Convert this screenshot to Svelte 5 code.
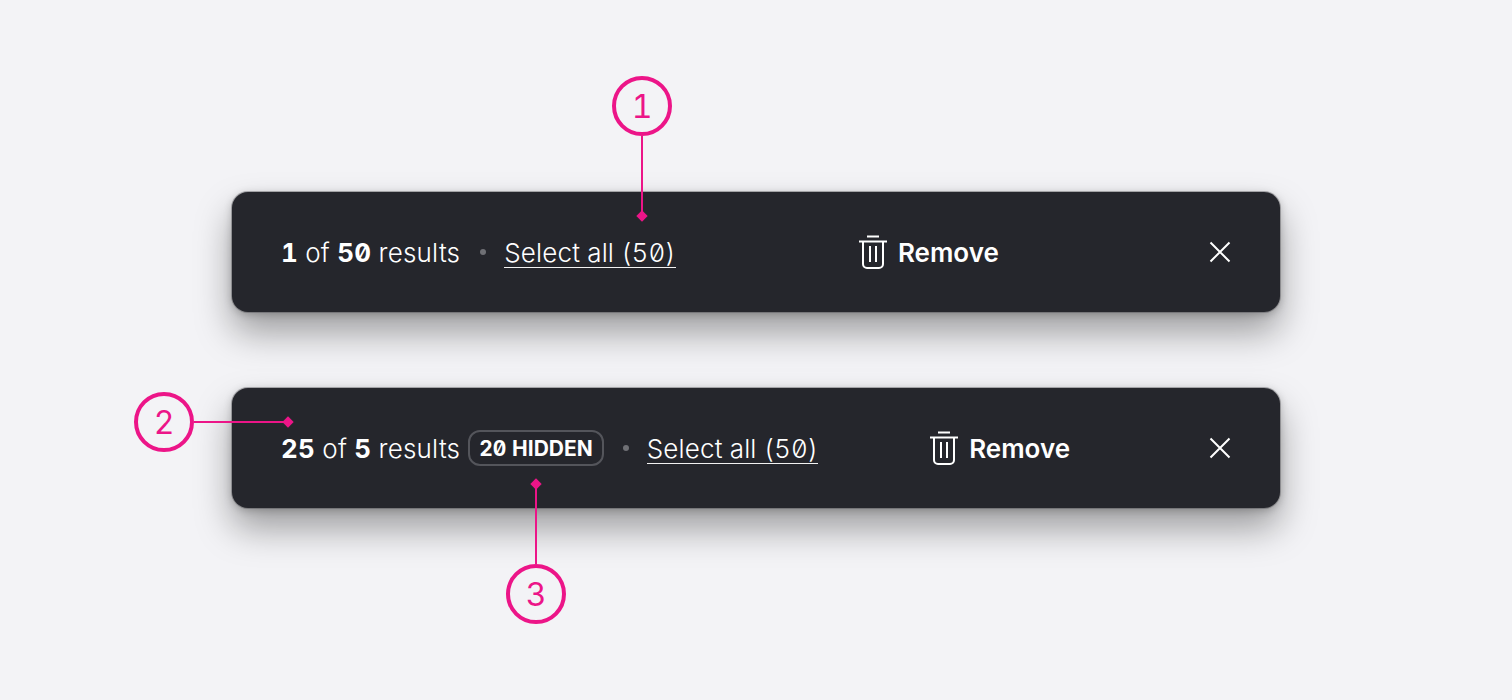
<script>
  const bars = [
    { a: '1', b: '50', hidden: null },
    { a: '25', b: '5', hidden: '20 HIDDEN' }
  ];
</script>

<main class="page">
  {#each bars as bar}
    <section class="bar">
      <div class="left">
        <span class="count"><b>{bar.a}</b> of <b>{bar.b}</b> results</span>
        {#if bar.hidden}<span class="badge">{bar.hidden}</span>{/if}
        <span class="dot"></span>
        <span class="link">Select all (50)</span>
      </div>
      <div class="remove">
        <svg width="28" height="34" viewBox="0 0 28 34" fill="none" stroke="#fff" stroke-width="2">
          <path d="M0 6.5H28M8 1.5H20M4 6.5V29a4 4 0 0 0 4 4H20a4 4 0 0 0 4-4V6.5M11 11V27M17 11V27"/>
        </svg>
        <span>Remove</span>
      </div>
      <svg class="close" width="22" height="22" viewBox="0 0 22 22" fill="none" stroke="#fff" stroke-width="2">
        <path d="M1.5 1.5L20.5 20.5M20.5 1.5L1.5 20.5"/>
      </svg>
    </section>
  {/each}

  <div class="pin one">
    <span class="circle">1</span><span class="vline"></span><span class="diamond"></span>
  </div>
  <div class="pin two">
    <span class="circle">2</span><span class="hline"></span><span class="diamond"></span>
  </div>
  <div class="pin three">
    <span class="diamond"></span><span class="vline"></span><span class="circle">3</span>
  </div>
</main>

<style>
  :global(body) {
    margin: 0;
    background: #f3f3f6;
  }
  .page {
    position: relative;
    height: 700px;
    box-sizing: border-box;
    padding-top: 192px;
    display: flex;
    flex-direction: column;
    align-items: center;
    gap: 76px;
    overflow: hidden;
    font-family: Inter, "Noto Sans", sans-serif;
    font-feature-settings: "zero", "tnum";
  }
  .bar {
    width: 1048px;
    height: 120px;
    box-sizing: border-box;
    padding: 0 49px;
    display: flex;
    align-items: center;
    justify-content: space-between;
    background: #25262c;
    border-radius: 16px;
    box-shadow: 0 0 0 1px rgba(80, 80, 85, 0.4), 0 20px 36px rgba(0, 0, 0, 0.36), 0 2px 8px rgba(0, 0, 0, 0.22);
    color: #fff;
    font-size: 26px;
    line-height: 32px;
  }
  .left {
    display: flex;
    align-items: center;
  }
  .count {
    font-weight: 300;
    white-space: nowrap;
    letter-spacing: 0.22px;
    padding-top: 2px;
  }
  .count b {
    font-weight: 700;
  }
  .badge {
    margin-left: 8px;
    padding: 0 9px;
    height: 36px;
    line-height: 34px;
    box-sizing: border-box;
    border: 2px solid #54555b;
    border-radius: 12px;
    font-size: 21px;
    font-weight: 700;
    white-space: nowrap;
  }
  .dot {
    width: 6px;
    height: 6px;
    margin: 0 18px 0 20px;
    border-radius: 50%;
    background: #6f7075;
  }
  .badge + .dot {
    margin-left: 19px;
    margin-right: 18px;
  }
  .link {
    font-weight: 300;
    white-space: nowrap;
    letter-spacing: 0.15px;
    padding-top: 2px;
    line-height: 29px;
    border-bottom: 1.5px solid #f2f2f2;
  }
  .remove {
    display: flex;
    align-items: center;
    gap: 11px;
    margin-right: 27px;
    font-weight: 600;
  }
  .remove span {
    padding-top: 1px;
  }
  .close {
    flex: none;
  }
  .pin {
    position: absolute;
    display: flex;
    align-items: center;
    color: #ec1588;
  }
  .circle {
    width: 60px;
    height: 60px;
    flex: none;
    box-sizing: border-box;
    border: 4px solid #ec1588;
    border-radius: 50%;
    background: #f3f3f6;
    display: flex;
    align-items: center;
    justify-content: center;
    font-size: 32px;
    font-weight: 400;
    padding-top: 1px;
  }
  .vline {
    width: 2px;
    flex: 1;
    background: #ec1588;
  }
  .hline {
    height: 2px;
    flex: 1;
    background: #ec1588;
  }
  .diamond {
    width: 8px;
    height: 8px;
    flex: none;
    transform: rotate(45deg);
    background: #ec1588;
  }
  .one, .three {
    flex-direction: column;
    width: 60px;
  }
  .one {
    left: 612px;
    top: 76px;
    height: 144px;
  }
  .one .diamond {
    margin-top: -4px;
  }
  .two {
    left: 134px;
    top: 392px;
    width: 158px;
    height: 60px;
  }
  .two .diamond {
    margin-left: -4px;
  }
  .three {
    left: 506px;
    top: 480px;
    height: 144px;
  }
  .three .diamond {
    margin-bottom: -4px;
  }
</style>
